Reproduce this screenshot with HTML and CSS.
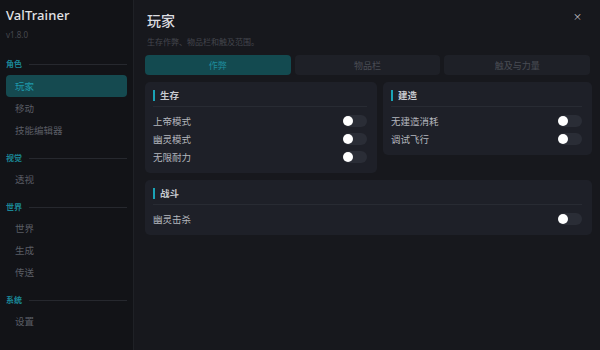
FILE: index.html
```html
<!DOCTYPE html>
<html>

<head>
  <meta charset="utf-8">
  <title>ValTrainer</title>
  <link rel="stylesheet" href="styles.css">
</head>

<body>
  <div class="app">

    <aside class="sidebar">
      <h1 class="logo">ValTrainer</h1>
      <div class="version">v1.8.0</div>

      <div class="group">
        <div class="group-title">角色</div>
        <a class="nav-item active">玩家</a>
        <a class="nav-item">移动</a>
        <a class="nav-item">技能编辑器</a>
      </div>

      <div class="group">
        <div class="group-title">视觉</div>
        <a class="nav-item">透视</a>
      </div>

      <div class="group">
        <div class="group-title">世界</div>
        <a class="nav-item">世界</a>
        <a class="nav-item">生成</a>
        <a class="nav-item">传送</a>
      </div>

      <div class="group">
        <div class="group-title">系统</div>
        <a class="nav-item">设置</a>
      </div>
    </aside>

    <main class="content">
      <div class="page-head">
        <div>
          <h2 class="page-title">玩家</h2>
          <p class="page-sub">生存作弊、物品栏和触及范围。</p>
        </div>
        <span class="close">&times;</span>
      </div>

      <div class="tabs">
        <button class="tab active">作弊</button>
        <button class="tab">物品栏</button>
        <button class="tab">触及与力量</button>
      </div>

      <div class="cards">
        <!-- 生存 -->
        <section class="card">
          <h3 class="card-title">生存</h3>
          <div class="row"><span>上帝模式</span><label class="switch"><input type="checkbox"><span class="slider"></span></label></div>
          <div class="row"><span>幽灵模式</span><label class="switch"><input type="checkbox"><span class="slider"></span></label></div>
          <div class="row"><span>无限耐力</span><label class="switch"><input type="checkbox"><span class="slider"></span></label></div>
        </section>

        <!-- 建造 -->
        <section class="card">
          <h3 class="card-title">建造</h3>
          <div class="row"><span>无建造消耗</span><label class="switch"><input type="checkbox"><span class="slider"></span></label></div>
          <div class="row"><span>调试飞行</span><label class="switch"><input type="checkbox"><span class="slider"></span></label></div>
        </section>

        <!-- 战斗 -->
        <section class="card wide">
          <h3 class="card-title">战斗</h3>
          <div class="row"><span>幽灵击杀</span><label class="switch"><input type="checkbox"><span class="slider"></span></label></div>
        </section>
      </div>
    </main>

  </div>
</body>

</html>
```

FILE: styles.css
```css
* {
  box-sizing: border-box;
}

html,
body {
  margin: 0;
  height: 100%;
}

body {
  background: #17181d;
  color: #c9cbd1;
  font-family: "Noto Sans CJK SC", "Noto Sans", sans-serif;
  font-size: 9px;
}

.app {
  display: flex;
  height: 100%;
}

/* Sidebar */
.sidebar {
  width: 134px;
  flex-shrink: 0;
  background: #121317;
  border-right: 1px solid #1f2126;
  padding: 6px 6px 0 6px;
}

.logo {
  margin: 0;
  font-family: "Noto Sans", sans-serif;
  font-size: 13px;
  font-weight: 500;
  line-height: 18px;
  color: #e2e3e6;
  letter-spacing: 0.1px;
}

.version {
  margin-top: 5px;
  font-size: 8px;
  line-height: 11px;
  color: #46484f;
  font-family: "Noto Sans", sans-serif;
}

.group {
  margin-top: 18px;
}

.group + .group {
  margin-top: 11px;
}

.group-title {
  display: flex;
  align-items: center;
  gap: 7px;
  font-size: 8px;
  line-height: 12px;
  color: #1a8796;
  font-weight: 700;
  margin-bottom: 5px;
}

.group + .group .group-title {
  margin-bottom: 4px;
}

.group-title::after {
  content: "";
  flex: 1;
  height: 1px;
  background: #26282e;
}

.nav-item {
  display: block;
  height: 22px;
  line-height: 22px;
  padding-left: 9px;
  border-radius: 4px;
  color: #5a5d65;
  font-size: 9.5px;
}

.nav-item.active {
  background: #154a50;
  color: #1f9aab;
}

/* Main */
.content {
  flex: 1;
  padding: 10px 10px 0 11px;
}

.page-head {
  display: flex;
  justify-content: space-between;
  align-items: flex-start;
}

.page-title {
  margin: 0 0 0 2px;
  font-size: 14px;
  line-height: 20px;
  font-weight: 500;
  color: #dcdde1;
}

.page-sub {
  margin: 6px 0 0 2px;
  font-size: 8px;
  line-height: 12px;
  color: #44464d;
}

.close {
  margin: 2px 8px 0 0;
  font-size: 9px;
  line-height: 10px;
  color: #d0d1d5;
}

.tabs {
  display: flex;
  gap: 4px;
  margin-top: 7px;
}

.tab {
  flex: 1;
  height: 20px;
  border: none;
  border-radius: 4px;
  background: #1e2027;
  color: #4a4d55;
  font-family: inherit;
  font-size: 9px;
  padding: 0;
}

.tab.active {
  background: #134a50;
  color: #1e8c9c;
}

.cards {
  display: grid;
  grid-template-columns: 232px 1fr;
  gap: 7px 6px;
  margin-top: 7px;
  margin-right: -2px;
  align-items: start;
}

.card {
  background: #1e2028;
  border-radius: 5px;
  padding: 7px 10px 7px 8px;
}

.card.wide {
  grid-column: 1 / 3;
}

.card-title {
  display: flex;
  align-items: center;
  gap: 5px;
  margin: 0 0 5px;
  padding-bottom: 4px;
  border-bottom: 1px solid #282b33;
  font-size: 9.5px;
  line-height: 13px;
  font-weight: 700;
  color: #c8cad0;
}

.card-title::before {
  content: "";
  width: 2px;
  height: 11px;
  background: #1aa3b6;
}

.row {
  display: flex;
  justify-content: space-between;
  align-items: center;
  height: 18px;
  color: #b4b7be;
  font-size: 9.5px;
}

/* Toggle */
.switch {
  position: relative;
  display: inline-block;
  width: 24px;
  height: 12px;
}

.switch input {
  display: none;
}

.slider {
  position: absolute;
  inset: 0;
  background: #2a2d36;
  border-radius: 6px;
}

.slider:before {
  content: "";
  position: absolute;
  left: 0;
  top: 1px;
  width: 10px;
  height: 10px;
  border-radius: 50%;
  background: #ffffff;
}
```
